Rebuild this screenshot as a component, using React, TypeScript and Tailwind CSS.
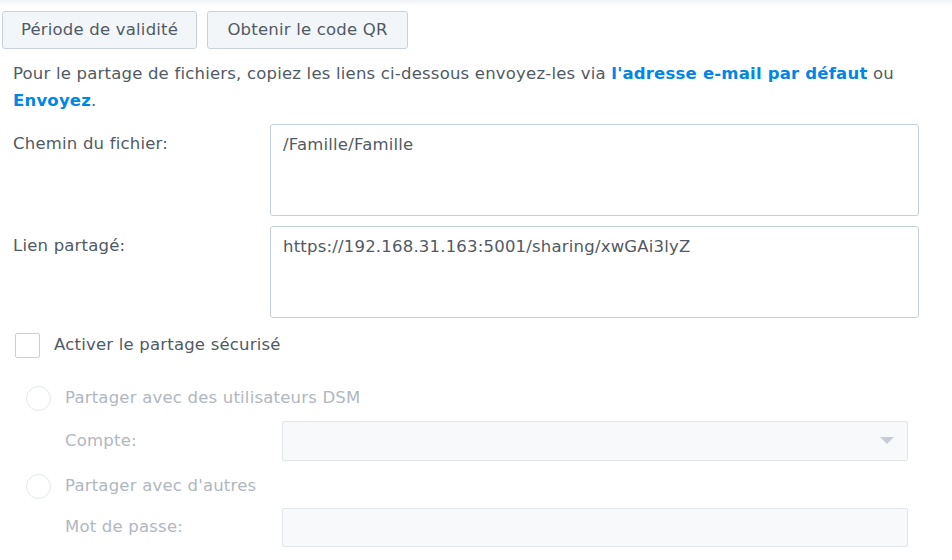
import React from 'react';

const font = { fontFamily: '"DejaVu Sans", Verdana, sans-serif' };

function Field({ label, value }: { label: string; value: string }) {
  return (
    <div className="flex">
      <div className="w-[270px] pl-[13px] pt-[8px]">{label}</div>
      <div className="w-[649px] h-[92px] border border-[#c6d0da] rounded-[3px] px-[12px] pt-[8px] text-[#505a64]">
        {value}
      </div>
    </div>
  );
}

function Radio({ label }: { label: string }) {
  return (
    <div className="flex items-center h-[26px] pl-[26px]">
      <span className="w-[25px] h-[25px] rounded-full border border-[#e3e8ee] bg-white" />
      <span className="ml-[14px] text-[#b0b7bf]">{label}</span>
    </div>
  );
}

export default function App() {
  return (
    <div
      className="relative w-[952px] h-[560px] bg-white text-[16.5px] tracking-[0.2px] text-[#505a64] overflow-hidden"
      style={font}
    >
      <div className="absolute inset-x-0 top-0 h-[6px] bg-gradient-to-b from-[#eef2f6] to-white" />

      <div className="relative flex gap-[10px] pl-[2px] pt-[11px]">
        <button className="w-[195px] h-[38px] bg-[#f3f6f9] border border-[#c8d2dc] rounded-[3px] text-[#505a64]">
          Période de validité
        </button>
        <button className="w-[201px] h-[38px] bg-[#f3f6f9] border border-[#c8d2dc] rounded-[3px] text-[#505a64]">
          Obtenir le code QR
        </button>
      </div>

      <p className="pl-[13px] pr-[20px] pt-[11px] leading-[27px]">
        Pour le partage de fichiers, copiez les liens ci-dessous envoyez-les via{' '}
        <span className="font-bold text-[#0086e5]">l'adresse e-mail par défaut</span> ou{' '}
        <span className="font-bold text-[#0086e5]">Envoyez</span>.
      </p>

      <div className="flex flex-col gap-[10px] mt-[10px]">
        <Field label="Chemin du fichier:" value="/Famille/Famille" />
        <Field label="Lien partagé:" value="https://192.168.31.163:5001/sharing/xwGAi3lyZ" />
      </div>

      <div className="flex items-center pl-[15px] mt-[15px] h-[25px]">
        <span className="w-[25px] h-[25px] border border-[#c6d0da] rounded-[2px] bg-white" />
        <span className="ml-[14px]">Activer le partage sécurisé</span>
      </div>

      <div className="mt-[27px]">
        <Radio label="Partager avec des utilisateurs DSM" />
      </div>

      <div className="flex items-center mt-[10px] text-[#b0b7bf]">
        <span className="w-[282px] pl-[65px]">Compte:</span>
        <div className="relative w-[626px] h-[40px] border border-[#e2e6ea] bg-[#f8f9fb] rounded-[2px]">
          <svg className="absolute right-[13px] top-[15px]" width="14" height="8" viewBox="0 0 14 8">
            <path d="M0 0 L14 0 L7 7 Z" fill="#c6ccd3" />
          </svg>
        </div>
      </div>

      <div className="mt-[12px]">
        <Radio label="Partager avec d'autres" />
      </div>

      <div className="flex items-center mt-[9px] text-[#b0b7bf]">
        <span className="w-[282px] pl-[65px]">Mot de passe:</span>
        <div className="w-[626px] h-[39px] border border-[#e2e6ea] bg-[#f8f9fb] rounded-[2px]" />
      </div>
    </div>
  );
}
